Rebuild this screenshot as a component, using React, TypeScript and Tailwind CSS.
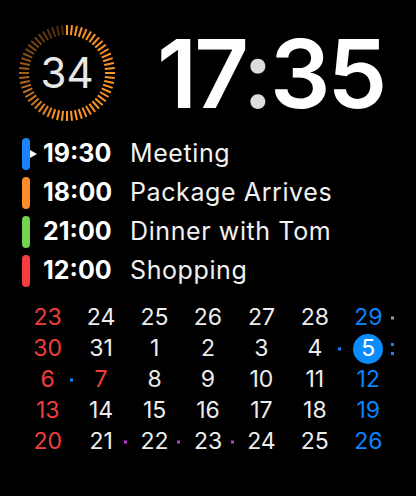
import React from "react";

const events = [
  { time: "19:30", title: "Meeting", color: "bg-[#1a82fb]", current: true },
  { time: "18:00", title: "Package Arrives", color: "bg-[#fd8c28]" },
  { time: "21:00", title: "Dinner with Tom", color: "bg-[#72d44e]" },
  { time: "12:00", title: "Shopping", color: "bg-[#f83b3e]" },
];

type Day = {
  n: number;
  tone?: "red" | "blue";
  today?: boolean;
  dot?: "gray" | "blue" | "pink" | "double";
};

const weeks: Day[][] = [
  [
    { n: 23, tone: "red" },
    { n: 24 },
    { n: 25 },
    { n: 26 },
    { n: 27 },
    { n: 28 },
    { n: 29, tone: "blue", dot: "gray" },
  ],
  [
    { n: 30, tone: "red" },
    { n: 31 },
    { n: 1 },
    { n: 2 },
    { n: 3 },
    { n: 4, dot: "blue" },
    { n: 5, today: true, dot: "double" },
  ],
  [
    { n: 6, tone: "red", dot: "blue" },
    { n: 7, tone: "red" },
    { n: 8 },
    { n: 9 },
    { n: 10 },
    { n: 11 },
    { n: 12, tone: "blue" },
  ],
  [
    { n: 13, tone: "red" },
    { n: 14 },
    { n: 15 },
    { n: 16 },
    { n: 17 },
    { n: 18 },
    { n: 19, tone: "blue" },
  ],
  [
    { n: 20, tone: "red" },
    { n: 21, dot: "pink" },
    { n: 22, dot: "pink" },
    { n: 23, dot: "pink" },
    { n: 24 },
    { n: 25 },
    { n: 26, tone: "blue" },
  ],
];

function Ring() {
  const ticks = Array.from({ length: 60 }, (_, i) => {
    const a = (i * 6 * Math.PI) / 180;
    const x1 = 49 + Math.sin(a) * 38;
    const y1 = 49 - Math.cos(a) * 38;
    const x2 = 49 + Math.sin(a) * 48;
    const y2 = 49 - Math.cos(a) * 48;
    // bright from 12 o'clock round to ~7, then fading out
    const op = i <= 32 ? 1 : 1 - ((i - 32) / 27) * 0.72;
    return (
      <line
        key={i}
        x1={x1}
        y1={y1}
        x2={x2}
        y2={y2}
        stroke="#fd9426"
        strokeWidth={2}
        opacity={op}
      />
    );
  });
  return (
    <div className="relative w-[98px] h-[98px] flex items-center justify-center shrink-0">
      <svg className="absolute inset-0" width="98" height="98" viewBox="0 0 98 98">
        {ticks}
      </svg>
      <span className="text-[42px] leading-none text-[#e8e8e8]">34</span>
    </div>
  );
}

function Dot({ kind }: { kind: Day["dot"] }) {
  if (!kind) return null;
  if (kind === "double") {
    return (
      <span className="absolute right-[1px] top-1/2 -translate-y-1/2 flex flex-col gap-[6px]">
        <span className="w-[3px] h-[3px] bg-[#0a84ff]" />
        <span className="w-[3px] h-[3px] bg-[#0a84ff]" />
      </span>
    );
  }
  const color =
    kind === "gray" ? "bg-[#8f9bab]" : kind === "blue" ? "bg-[#0a84ff]" : "bg-[#cc33e6]";
  return (
    <span
      className={`absolute right-[1px] top-1/2 -translate-y-1/2 w-[3px] h-[3px] ${color}`}
    />
  );
}

export default function App() {
  return (
    <div
      className="w-[416px] h-[496px] bg-black text-white overflow-hidden"
      style={{ fontFamily: "Inter, 'Liberation Sans', sans-serif" }}
    >
      <div className="flex items-center pt-[24px] pl-[18px]">
        <Ring />
        <div className="ml-[41px] text-[95px] leading-none font-semibold tracking-[-3px] text-white">
          17<span className="text-[#dcdcdc]">:</span>35
        </div>
      </div>

      <div className="mt-[12px] pl-[22px]">
        {events.map((e) => (
          <div key={e.time} className="flex items-center h-[39px]">
            <div className={`relative w-[8px] h-[32px] rounded-full ${e.color}`}>
              {e.current && (
                <span className="absolute left-[8px] top-1/2 -translate-y-1/2 w-0 h-0 border-y-[4px] border-y-transparent border-l-[7px] border-l-white" />
              )}
            </div>
            <span className="ml-[13px] w-[87px] text-[25px] font-bold leading-none">
              {e.time}
            </span>
            <span className="text-[25px] leading-none tracking-[0.6px] text-[#f2f2f2]">
              {e.title}
            </span>
          </div>
        ))}
      </div>

      <div className="mt-[12px] px-[21px]">
        {weeks.map((w, wi) => (
          <div key={wi} className="grid grid-cols-7 h-[31px]">
            {w.map((d, di) => (
              <div key={di} className="relative flex items-center justify-center">
                {d.today ? (
                  <span className="w-[30px] h-[30px] rounded-full bg-[#0a8cff] flex items-center justify-center text-[23px] leading-none text-white">
                    {d.n}
                  </span>
                ) : (
                  <span
                    className={`text-[23px] leading-none ${
                      d.tone === "red"
                        ? "text-[#f23c3c]"
                        : d.tone === "blue"
                        ? "text-[#0a84ff]"
                        : "text-[#ececec]"
                    }`}
                  >
                    {d.n}
                  </span>
                )}
                <Dot kind={d.dot} />
              </div>
            ))}
          </div>
        ))}
      </div>
    </div>
  );
}
